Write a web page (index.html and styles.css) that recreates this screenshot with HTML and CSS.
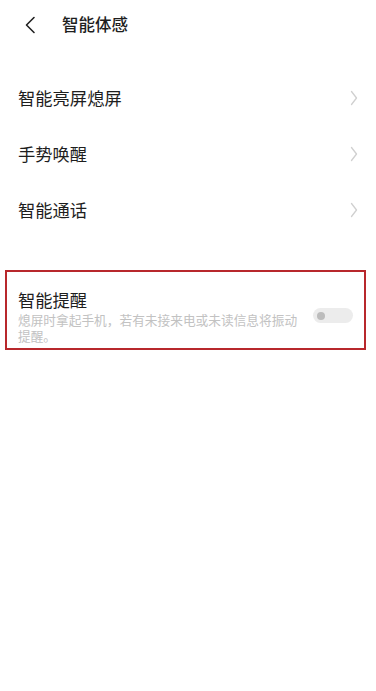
FILE: index.html
```html
<!DOCTYPE html>
<html lang="zh-CN">
<head>
<meta charset="utf-8">
<title>智能体感</title>
<link rel="stylesheet" href="styles.css">
</head>
<body>
<div class="page">
  <header class="topbar">
    <svg class="back" width="12" height="18" viewBox="0 0 12 18" aria-hidden="true">
      <path d="M10 1.5 L2.5 9 L10 16.5" fill="none" stroke="#222" stroke-width="1.6" stroke-linecap="round" stroke-linejoin="round"/>
    </svg>
    <h1 class="title">智能体感</h1>
  </header>

  <ul class="list">
    <li class="item"><span class="label">智能亮屏熄屏</span><svg class="chev" width="8" height="16" viewBox="0 0 8 16" aria-hidden="true"><path d="M1.5 1.5 L6.5 8 L1.5 14.5" fill="none" stroke="#d0d0d0" stroke-width="1.3" stroke-linecap="round" stroke-linejoin="round"/></svg></li>
    <li class="item"><span class="label">手势唤醒</span><svg class="chev" width="8" height="16" viewBox="0 0 8 16" aria-hidden="true"><path d="M1.5 1.5 L6.5 8 L1.5 14.5" fill="none" stroke="#d0d0d0" stroke-width="1.3" stroke-linecap="round" stroke-linejoin="round"/></svg></li>
    <li class="item"><span class="label">智能通话</span><svg class="chev" width="8" height="16" viewBox="0 0 8 16" aria-hidden="true"><path d="M1.5 1.5 L6.5 8 L1.5 14.5" fill="none" stroke="#d0d0d0" stroke-width="1.3" stroke-linecap="round" stroke-linejoin="round"/></svg></li>
  </ul>

  <section class="remind">
    <div class="remind-text">
      <div class="remind-title">智能提醒</div>
      <div class="remind-desc">熄屏时拿起手机，若有未接来电或未读信息将振动提醒。</div>
    </div>
    <div class="toggle"><span class="knob"></span></div>
  </section>
</div>
</body>
</html>
```

FILE: styles.css
```css
* { box-sizing: border-box; }
html, body {
  margin: 0;
  padding: 0;
  background: #fff;
}
body {
  font-family: "Noto Sans CJK SC", "Noto Sans", sans-serif;
  color: #1e1e1e;
}
.page {
  width: 376px;
  height: 691px;
  overflow: hidden;
}
.topbar {
  height: 48px;
  display: flex;
  align-items: center;
  padding-left: 24px;
}
.back {
  display: block;
  margin-top: 1px;
}
.title {
  margin: 0 0 0 26px;
  font-size: 16.5px;
  font-weight: 500;
  line-height: 22px;
  color: #1e1e1e;
}
.list {
  list-style: none;
  margin: 22px 0 0;
  padding: 0;
}
.item {
  height: 56px;
  display: flex;
  align-items: center;
  justify-content: space-between;
  padding: 0 18px 0 18px;
}
.label {
  font-size: 17.3px;
  line-height: 22px;
  color: #1e1e1e;
}
.chev {
  display: block;
  margin-right: 0;
}
.remind {
  margin: 32px 10px 0 5px;
  border: 2px solid #b8282c;
  display: flex;
  align-items: flex-start;
  gap: 13px;
  padding: 17px 11px 5px 11px;
}
.remind-text {
  flex: 1;
  min-width: 0;
}
.remind-title {
  font-size: 17.3px;
  line-height: 22px;
  color: #1e1e1e;
}
.remind-desc {
  margin-top: 1px;
  font-size: 12.7px;
  line-height: 15.5px;
  color: #c2c2c2;
}
.toggle {
  width: 40px;
  height: 15px;
  border-radius: 8px;
  background: #ececec;
  margin-top: 19px;
  display: flex;
  align-items: center;
  padding-left: 4px;
  flex-shrink: 0;
}
.knob {
  width: 8px;
  height: 8px;
  border-radius: 50%;
  background: #bcbcbc;
}
```
